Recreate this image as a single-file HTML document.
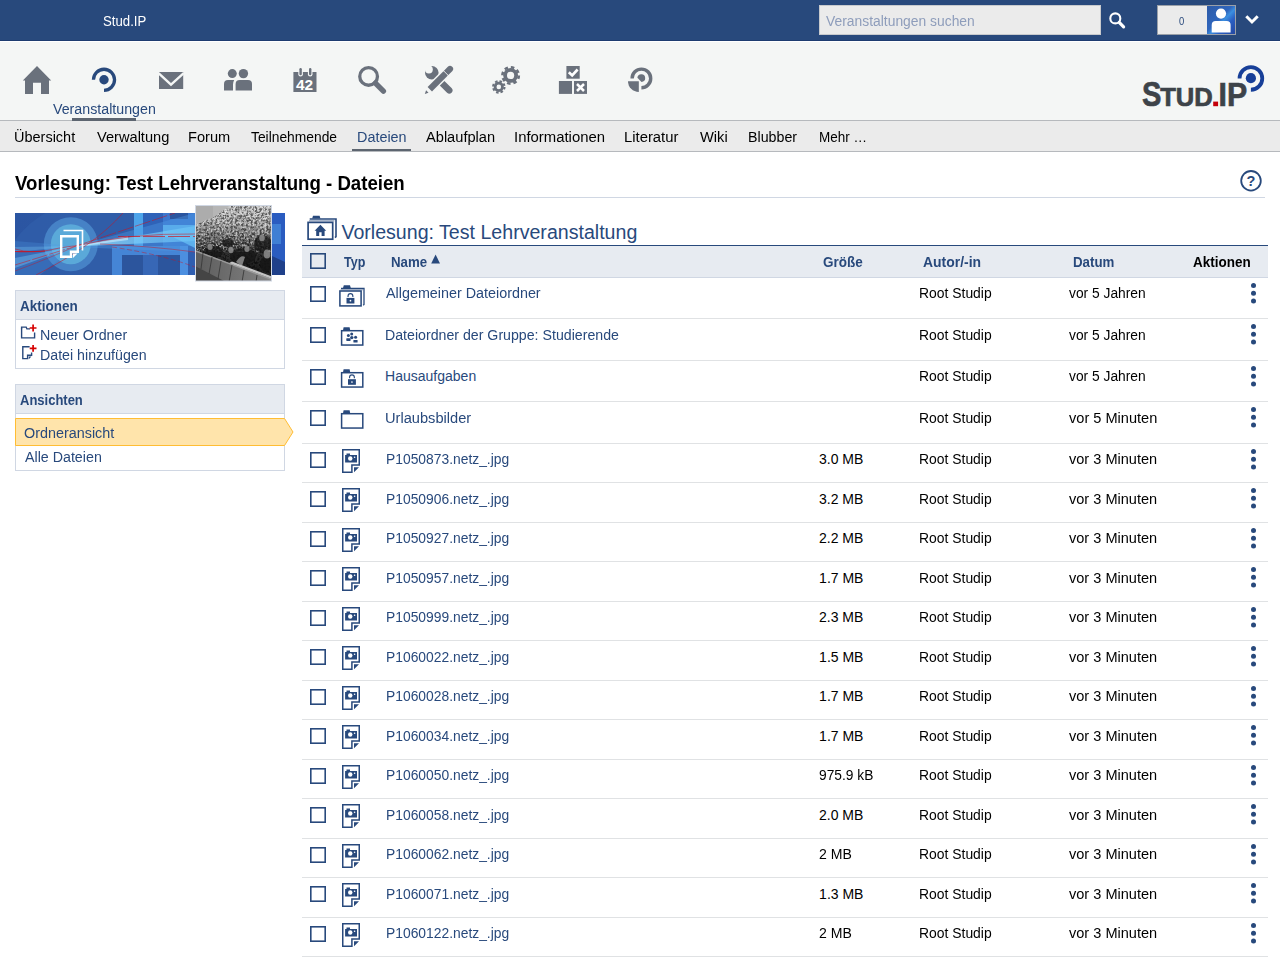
<!DOCTYPE html>
<html lang="de"><head><meta charset="utf-8"><title>Stud.IP - Dateien</title>
<style>
html,body{margin:0;padding:0;width:1280px;height:960px;overflow:hidden;background:#fff;font-family:"Liberation Sans",sans-serif;}
.abs{position:absolute;display:block}
.t{position:absolute;white-space:nowrap;transform-origin:0 0;}
.sep{position:absolute;left:302px;width:966px;height:1px;background:#e0e2e4}
.box{position:absolute;box-sizing:border-box}
svg{overflow:visible}
</style></head><body>
<svg width="0" height="0" style="position:absolute"><defs>
<g id="cb"><rect x="0.8" y="0.8" width="14.4" height="14.4" fill="none" stroke="#28497c" stroke-width="1.6"/></g>
<g id="kebab" fill="#28497c"><circle cx="4.5" cy="4.5" r="2.5"/><circle cx="4.5" cy="12.3" r="2.5"/><circle cx="4.5" cy="20" r="2.5"/></g>
<g id="i-file">
<path d="M2.75,1.75H19.25V17H11.9V24.15H2.75Z" fill="none" stroke="#28497c" stroke-width="1.5"/>
<path d="M14,19.25H19L14,24.2Z" fill="#28497c"/>
<path d="M5.1,6.9H6.5V5.5H10V6.9H17V14.4H5.1Z" fill="#28497c"/>
<circle cx="10.25" cy="10.5" r="2.2" fill="#fff"/><circle cx="14.6" cy="9.2" r="0.8" fill="#fff"/>
</g>
<g id="folderbase">
<rect x="3.6" y="5.7" width="21.2" height="14.35" fill="none" stroke="#28497c" stroke-width="1.5"/>
<path d="M5,5.2L5.6,2.2H11.6L12.2,5.2Z" fill="#28497c"/>
</g>
<g id="i-fempty"><use href="#folderbase"/></g>
<g id="lock" fill="#28497c">
<rect x="10" y="12.2" width="7.9" height="5.6"/>
<path d="M11.55,11.3V10.3a2.4,2.4 0 0 1 4.8,0V11.3" fill="none" stroke="#28497c" stroke-width="1.15"/>
<circle cx="13.95" cy="15" r="0.85" fill="#fff"/>
</g>
<g id="i-flock"><use href="#folderbase"/><use href="#lock"/></g>
<g id="i-fgroup"><use href="#folderbase"/>
<g fill="#28497c"><circle cx="10.4" cy="10.6" r="1.5"/><circle cx="13.7" cy="9" r="1.5"/><circle cx="13.8" cy="12.6" r="1.7"/><circle cx="17.6" cy="12.3" r="1.5"/>
<rect x="8.3" y="13.2" width="4.3" height="2.7" rx="0.6"/><rect x="15.4" y="15" width="4.2" height="2.6" rx="0.6"/></g>
</g>
<g id="i-fmulti">
<rect x="1.9" y="7" width="21.2" height="14.9" fill="none" stroke="#28497c" stroke-width="1.55"/>
<rect x="2.6" y="5" width="22.6" height="1.3" fill="#28497c" opacity="0.45"/>
<path d="M3,4.4H26V20.4L25.2,21.2" fill="none" stroke="#28497c" stroke-width="1.3"/>
<path d="M5,4L5.8,1.3H12L12.8,4Z" fill="#28497c"/>
<g transform="translate(-1.5,1.7)"><use href="#lock"/></g>
</g>
</defs></svg>
<!-- ===== top bar ===== -->
<div class="box" style="left:0;top:0;width:1280px;height:40px;background:#28497c"></div>
<div class="box" style="left:0;top:40px;width:1280px;height:1px;background:#1d3c70"></div>
<div class="box" style="left:0;top:41px;width:1280px;height:1px;background:#fff"></div>
<div class="box" style="left:0;top:42px;width:1280px;height:78px;background:#f4f6f5"></div>
<!-- search field -->
<div class="box" style="left:819px;top:5px;width:282px;height:30px;background:#ebebeb;border:1px solid #c8cacd"></div>
<svg class="abs" style="left:1107px;top:10px" width="20" height="20"><circle cx="8.3" cy="8.4" r="5" fill="none" stroke="#fff" stroke-width="2.1"/><path d="M12.2,12.4L16.6,16.8" stroke="#fff" stroke-width="3.2" stroke-linecap="round"/></svg>
<!-- notification + avatar -->
<div class="box" style="left:1157px;top:5px;width:79px;height:30px;background:#ebebeb;border:1px solid #9aa0a8"></div>
<svg class="abs" style="left:1207px;top:6px" width="28" height="28">
<defs><linearGradient id="avg" x1="0" y1="0" x2="1" y2="1"><stop offset="0" stop-color="#2d5aa6"/><stop offset="0.45" stop-color="#2f66bd"/><stop offset="0.55" stop-color="#3b8fe0"/><stop offset="0.7" stop-color="#2a5fc4"/><stop offset="1" stop-color="#2448a0"/></linearGradient></defs>
<rect width="28" height="28" fill="url(#avg)"/>
<circle cx="14" cy="7.6" r="5.1" fill="#fff"/>
<path d="M4.7,26.5V19a4,4 0 0 1 4,-4H19.6a4,4 0 0 1 4,4V26.5Z" fill="#fff"/>
</svg>
<svg class="abs" style="left:1243px;top:12px" width="18" height="16"><path d="M3.3,4.3L9,10L14.7,4.3" fill="none" stroke="#fff" stroke-width="3"/></svg>

<!-- ===== main nav icons ===== -->
<svg class="abs" style="left:0;top:42px" width="700" height="78" viewBox="0 42 700 78">
<g fill="#6a717c">
<!-- home -->
<path d="M37,66L51.2,80.4H49V94H41V82.8H33V94H25V80.4H22.8Z"/>
<!-- mail -->
<rect x="159" y="72" width="24.2" height="17"/>
<path d="M158.5,73.2L171,84.6L183.7,73.2" fill="none" stroke="#f4f6f5" stroke-width="2.4"/>
<!-- community -->
<circle cx="232.3" cy="73.6" r="4.5"/><circle cx="243.4" cy="73.6" r="4.7"/>
<path d="M224,90.6V84a4,4 0 0 1 4,-4H234.2Q233,82 233,84.5V90.6Z"/>
<path d="M235.6,90.6V84a4,4 0 0 1 4,-4H248a4,4 0 0 1 4,4V90.6Z"/>
<!-- calendar -->
<rect x="293.4" y="72" width="23.1" height="20"/>
<rect x="298.3" y="67" width="4.6" height="9.6" rx="2.3" fill="#f4f6f5"/><rect x="307.9" y="67" width="4.6" height="9.6" rx="2.3" fill="#f4f6f5"/>
<rect x="299.4" y="68" width="2.4" height="7.2" rx="1.2"/><rect x="309" y="68" width="2.4" height="7.2" rx="1.2"/>
<text x="296" y="89.7" font-family="Liberation Sans" font-weight="700" font-size="15" fill="#fff" textLength="17.2" lengthAdjust="spacingAndGlyphs">42</text>
<!-- search -->
<circle cx="368.6" cy="76.4" r="8.85" fill="none" stroke="#6a717c" stroke-width="3.3"/>
<path d="M375.4,83.2L383.4,91.1" stroke="#6a717c" stroke-width="5.4" stroke-linecap="round"/>
<!-- tools: wrench -->
<circle cx="431.8" cy="72.8" r="6.8"/>
<circle cx="428.9" cy="69.5" r="3.9" fill="#f4f6f5"/>
<path d="M434.5,75.8L449.3,90.4" stroke="#6a717c" stroke-width="6.4" stroke-linecap="round"/>
<!-- pencil (with white outline gap) -->
<path d="M427.5,91.5L450.5,68.5" stroke="#f4f6f5" stroke-width="9" />
<path d="M429.8,89.2L445.4,73.6" stroke="#6a717c" stroke-width="6.2"/>
<path d="M446.4,72.6L450,69" stroke="#6a717c" stroke-width="6.2" stroke-linecap="round"/>
<path d="M443.4,70.6L448.4,75.6" stroke="#f4f6f5" stroke-width="0.9"/>
<path d="M424.8,94L426.1,90.3L428.5,92.7Z"/>
<!-- gears -->
<circle cx="510.6" cy="75.4" r="7.4"/><circle cx="510.6" cy="75.4" r="8.2" fill="none" stroke="#6a717c" stroke-width="2.6" stroke-dasharray="3.5 2.94"/>
<circle cx="510.6" cy="75.4" r="3.6" fill="#f4f6f5"/>
<circle cx="498.8" cy="86.9" r="5.1"/><circle cx="498.8" cy="86.9" r="5.7" fill="none" stroke="#6a717c" stroke-width="2.1" stroke-dasharray="2.5 1.98"/>
<circle cx="498.8" cy="86.9" r="2.3" fill="#f4f6f5"/>
<!-- blocks -->
<rect x="566.4" y="66" width="13.3" height="12.7"/><rect x="558.9" y="81" width="13.1" height="12.9"/><rect x="574" y="81" width="13" height="12.9"/>
<path d="M568.8,72.2L572.2,75.4L577.6,69.5" fill="none" stroke="#fff" stroke-width="2.7"/>
<path d="M577,84L584,91M584,84L577,91" stroke="#fff" stroke-width="2.5"/>
<!-- plugin -->
<path d="M632.1,78.4A9.3,9.3 0 1 1 641.4,87.7" fill="none" stroke="#6a717c" stroke-width="3.4"/>
<path d="M637.4,77.8A3.9,3.9 0 1 1 641.5,82Z"/>
<path d="M638.8,81.2V92A10.8,10.8 0 0 1 628,81.2Z"/>
</g>
<!-- seminar (active) -->
<path d="M93.45,79.8A10.55,10.55 0 1 1 104,90.35" fill="none" stroke="#28497c" stroke-width="3.3"/>
<circle cx="104" cy="79.8" r="4.7" fill="#28497c"/>
</svg>
<div class="box" style="left:72px;top:118px;width:64px;height:3px;background:#5d6570"></div>

<!-- logo -->
<svg class="abs" style="left:1130px;top:60px" width="150" height="56" viewBox="1130 60 150 56">
<g font-family="Liberation Sans" font-weight="700" fill="#3d4349" stroke="#3d4349" stroke-width="0.7">
<text x="1142" y="106" font-size="34.6" textLength="19.4" lengthAdjust="spacingAndGlyphs">S</text>
<text x="1160.2" y="106" font-size="26.5" textLength="52.6" lengthAdjust="spacingAndGlyphs">TUD</text>
<text x="1218.6" y="106" font-size="33.8" textLength="28.6" lengthAdjust="spacingAndGlyphs">IP</text>
</g>
<rect x="1213.2" y="101.6" width="4.9" height="4.6" fill="#c4000a"/>
<path d="M1239.55,78.4A11.35,11.35 0 1 1 1250.9,89.75" fill="none" stroke="#173f98" stroke-width="3.8"/>
<circle cx="1250.9" cy="78.2" r="5.1" fill="#173f98"/>
</svg>

<!-- ===== tabs bar ===== -->
<div class="box" style="left:0;top:120px;width:1280px;height:32px;background:#ebebeb;border-top:1px solid #b6b9bd;border-bottom:1px solid #b6b9bd"></div>
<div class="box" style="left:72px;top:118px;width:64px;height:3px;background:#5d6570"></div>
<div class="box" style="left:352px;top:149px;width:59px;height:2px;background:#5d6570"></div>

<!-- ===== page title ===== -->
<div class="box" style="left:15px;top:197px;width:1250px;height:1px;background:#d0d7e3"></div>
<svg class="abs" style="left:1239px;top:169px" width="24" height="24"><circle cx="12" cy="11.8" r="9.8" fill="none" stroke="#28497c" stroke-width="1.8"/>
<text x="12" y="17" text-anchor="middle" font-family="Liberation Sans" font-weight="700" font-size="14.5" fill="#28497c">?</text></svg>

<!-- ===== sidebar ===== -->
<svg class="abs" style="left:15px;top:205px" width="270" height="77" viewBox="15 205 270 77">
<defs>
<linearGradient id="bg1" x1="0" y1="0" x2="1" y2="0"><stop offset="0" stop-color="#2b55a2"/><stop offset="0.5" stop-color="#2f5aa3"/><stop offset="1" stop-color="#2c57a2"/></linearGradient>
<linearGradient id="ph" x1="0" y1="0" x2="0" y2="1"><stop offset="0" stop-color="#cdcdcd"/><stop offset="0.22" stop-color="#b0b0b0"/><stop offset="0.4" stop-color="#787878"/><stop offset="0.56" stop-color="#3c3c3c"/><stop offset="0.8" stop-color="#1f1f1f"/><stop offset="1" stop-color="#2a2a2a"/></linearGradient>
<linearGradient id="bench" x1="0" y1="0" x2="1" y2="0"><stop offset="0" stop-color="#5c5c5c"/><stop offset="0.6" stop-color="#747474"/><stop offset="1" stop-color="#858585"/></linearGradient>
<linearGradient id="rayR" x1="0" y1="0" x2="1" y2="0"><stop offset="0" stop-color="#9fe2ff" stop-opacity="0.9"/><stop offset="1" stop-color="#6cc6f7" stop-opacity="0.75"/></linearGradient>
<filter id="noise" x="0" y="0" width="100%" height="100%"><feTurbulence type="fractalNoise" baseFrequency="0.55" numOctaves="2" seed="11" result="n"/><feColorMatrix in="n" type="matrix" values="0 0 0 0 1  0 0 0 0 1  0 0 0 0 1  2.6 2.6 0 0 -2.3"/></filter>
<filter id="noiseD" x="0" y="0" width="100%" height="100%"><feTurbulence type="fractalNoise" baseFrequency="0.45" numOctaves="2" seed="3" result="n"/><feColorMatrix in="n" type="matrix" values="0 0 0 0 0  0 0 0 0 0  0 0 0 0 0  0 2.8 2.8 0 -2.5"/></filter>
<clipPath id="bclip"><rect x="15" y="213" width="270" height="62"/></clipPath>
<clipPath id="pclip"><rect x="195.5" y="205.5" width="76" height="75.5"/></clipPath>
</defs>
<rect x="15" y="213" width="270" height="62" fill="url(#bg1)"/>
<g clip-path="url(#bclip)">
<circle cx="95" cy="300" r="100" fill="#3260ab" opacity="0.6"/>
<!-- light structures -->
<rect x="112" y="246" width="83" height="29" fill="#4585d6"/>
<rect x="122" y="255" width="58" height="20" fill="#2c559d"/>
<rect x="143" y="255" width="15" height="20" fill="#3767b6"/>
<rect x="180" y="246" width="8" height="29" fill="#4c8fe0"/>
<rect x="188" y="246" width="7" height="29" fill="#2f5eb0"/>
<rect x="134" y="213" width="9" height="33" fill="#4da4ea"/>
<rect x="143" y="213" width="20" height="33" fill="#2f62b8"/>
<rect x="163" y="213" width="32" height="33" fill="#3b78cf"/>
<rect x="170" y="213" width="18" height="6" fill="#2a559f"/>
<rect x="163" y="225" width="32" height="12" fill="#5fb6ef"/>
<path d="M171,236H195V248Z" fill="#66bdf2"/>
<rect x="272" y="213" width="13" height="62" fill="#2a5cc0"/>
<rect x="272" y="224" width="9" height="20" fill="#3f7fd4"/>
<path d="M272,256L285,262V275H272Z" fill="#1f408a"/>
<!-- circles -->
<circle cx="70.8" cy="244.2" r="27" fill="#4682c6"/>
<circle cx="70.8" cy="244.2" r="20" fill="#5aa9d9"/>
<!-- beams -->
<path d="M76,246L15,241V275H40Z" fill="#4f9ce6" opacity="0.25"/>
<path d="M76,246L15,258V268Z" fill="#7cc9f5" opacity="0.4"/><path d="M76,246L15,247V252Z" fill="#7cc9f5" opacity="0.3"/>
<path d="M72,247L195,213V252Z" fill="#4f9ce6" opacity="0.38"/>
<path d="M74,246.5L195,226V241Z" fill="url(#rayR)" opacity="0.8"/>
<path d="M60,249L128,236L128,240Z" fill="#d6f2ff" opacity="0.55"/>
<!-- red lines -->
<g fill="none" stroke="#d0101c" stroke-width="0.6" opacity="0.85">
<path d="M15,249Q32,254 50,250T76,246"/>
<path d="M15,251.5Q32,252 45,251" stroke-width="1.1"/>
<path d="M15,265L76,246L175,213" stroke-dasharray="16 2"/>
<path d="M15,271Q50,258 76,246" opacity="0.8"/>
<path d="M36,275Q95,245 123,213"/>
<path d="M76,246Q130,233 195,234" />
<path d="M118,236.5H195" stroke-width="0.8" stroke-dasharray="22 3"/>
<path d="M100,244Q150,246 195,252" opacity="0.9"/>
<path d="M112,247Q160,254 195,267" stroke-dasharray="5 2.5" opacity="0.85"/>
</g>
<!-- files icon -->
<path d="M63.5,230.5H82.5V250.5" fill="none" stroke="#fff" stroke-width="1.6"/>
<path d="M61.2,236.2H77.8V251.8H71V256.8H61.2Z" fill="none" stroke="#fff" stroke-width="2.4"/>
<path d="M73,253.5H77.5L73,258Z" fill="#fff"/>
</g>
<!-- photo -->
<rect x="195.5" y="205.5" width="76" height="75.5" fill="url(#ph)"/>
<g clip-path="url(#pclip)">
<rect x="195.5" y="205.5" width="76" height="46" filter="url(#noise)" opacity="0.5"/>
<rect x="195.5" y="205.5" width="76" height="75.5" filter="url(#noiseD)" opacity="0.55"/>
<path d="M195,205H231L214,217L195,225Z" fill="#b6b6b6"/>
<path d="M195,205H213V217L195,224Z" fill="#a8a8a8" opacity="0.7"/>
<g fill="#161616" opacity="0.78"><ellipse cx="213" cy="252" rx="10" ry="6"/><ellipse cx="243" cy="256" rx="13" ry="8"/><ellipse cx="263" cy="244" rx="9" ry="9"/><ellipse cx="228" cy="243" rx="6" ry="4"/><ellipse cx="266" cy="264" rx="6" ry="8"/></g>
<g fill="#8e8e8e" opacity="0.85"><ellipse cx="210" cy="247" rx="2.6" ry="3"/><ellipse cx="231" cy="250" rx="2.6" ry="3.2"/><ellipse cx="247" cy="249" rx="2.6" ry="3"/><ellipse cx="262" cy="238" rx="2.8" ry="3.2"/><ellipse cx="267" cy="254" rx="3.4" ry="4.5"/></g>
<path d="M236,262Q241,254 245,257L242,266Z" fill="#7e7e7e"/>
<path d="M195,250L272,279V282H195Z" fill="url(#bench)"/>
<path d="M195,250L272,279V280.2L195,251.6Z" fill="#9a9a9a"/>
<path d="M232,261.5L272,276.5V279L229,263Z" fill="#c2c2c2"/>
<path d="M195,266L226,282H195Z" fill="#454545"/>
<g stroke="#3a3a3a" stroke-width="0.9"><path d="M203,253L201,269"/><path d="M212,257L209,274"/><path d="M221,261L218,279"/><path d="M232,265L229,282"/><path d="M244,270L242,282"/><path d="M257,275L256,282"/></g>
</g>
<rect x="195.5" y="205.5" width="76" height="75.5" fill="none" stroke="#d0d7e3" stroke-width="1"/>
</svg>

<!-- widget: Aktionen -->
<div class="box" style="left:15px;top:290px;width:270px;height:79px;border:1px solid #d0d7e3;background:#fff"></div>
<div class="box" style="left:16px;top:291px;width:268px;height:29px;background:#e7ebf1;border-bottom:1px solid #d0d7e3"></div>
<svg class="abs" style="left:20px;top:324px" width="17" height="16">
<path d="M1.6,4.9V3.1H6.2L6.9,4.9H10" fill="none" stroke="#28497c" stroke-width="1.4"/>
<path d="M1.6,4.4V13.9H14.6V8.5" fill="none" stroke="#28497c" stroke-width="1.4"/>
<path d="M13.1,0.6V7.4M9.7,4H16.5" stroke="#d60000" stroke-width="1.7"/>
</svg>
<svg class="abs" style="left:20px;top:344px" width="17" height="17">
<path d="M9.6,2.7H2.8V14.6H7.6V11.2H11.6V8.6" fill="none" stroke="#28497c" stroke-width="1.4"/>
<path d="M8.8,12.6H11.4L8.8,15.2Z" fill="#28497c"/>
<path d="M13.1,1V7.8M9.7,4.4H16.5" stroke="#d60000" stroke-width="1.7"/>
</svg>

<!-- widget: Ansichten -->
<div class="box" style="left:15px;top:384px;width:270px;height:87px;border:1px solid #d0d7e3;background:#fff"></div>
<div class="box" style="left:16px;top:385px;width:268px;height:29px;background:#e7ebf1;border-bottom:1px solid #d0d7e3"></div>
<svg class="abs" style="left:15px;top:417px" width="280" height="30"><path d="M0.5,1.5H269.5L278,15L269.5,28.5H0.5Z" fill="#ffe4ab" stroke="#ffbd33" stroke-width="1"/></svg>

<!-- ===== table ===== -->
<svg class="abs" style="left:305px;top:214px" width="34" height="28">
<rect x="3.1" y="8.4" width="24.6" height="16.8" fill="none" stroke="#28497c" stroke-width="1.7"/>
<rect x="4" y="6.1" width="25.4" height="1.4" fill="#28497c" opacity="0.45"/>
<path d="M4.7,5H31V22.6L30,23.6" fill="none" stroke="#28497c" stroke-width="1.6"/>
<path d="M7.2,4.5L8,1.8H14.6L15.4,4.5Z" fill="#28497c"/>
<path d="M15.4,10.8L21.2,16.8H19.6V22H16.6V18.2H14.2V22H11.2V16.8H9.6Z" fill="#28497c"/>
</svg>
<div class="box" style="left:302px;top:245px;width:966px;height:1px;background:#28497c"></div>
<div class="box" style="left:302px;top:246px;width:966px;height:31px;background:#e7ebf1"></div>
<div class="box" style="left:302px;top:277px;width:966px;height:1px;background:#d0d7e3"></div>
<svg class="abs" style="left:310px;top:253px" width="16" height="16"><use href="#cb"/></svg>
<svg class="abs" style="left:431px;top:254px" width="10" height="10"><path d="M0.2,9.5L4.6,0.5L9,9.5Z" fill="#28497c"/></svg>
<div class="sep" style="top:318px"></div>
<div class="sep" style="top:360px"></div>
<div class="sep" style="top:401px"></div>
<div class="sep" style="top:443px"></div>
<div class="sep" style="top:482px"></div>
<div class="sep" style="top:522px"></div>
<div class="sep" style="top:561px"></div>
<div class="sep" style="top:601px"></div>
<div class="sep" style="top:640px"></div>
<div class="sep" style="top:680px"></div>
<div class="sep" style="top:719px"></div>
<div class="sep" style="top:759px"></div>
<div class="sep" style="top:798px"></div>
<div class="sep" style="top:838px"></div>
<div class="sep" style="top:877px"></div>
<div class="sep" style="top:917px"></div>
<div class="sep" style="top:956px"></div>
<svg class="abs" style="left:310px;top:286.0px" width="16" height="16"><use href="#cb"/></svg>
<svg class="abs" style="left:1249px;top:281.0px" width="9" height="24"><use href="#kebab"/></svg>
<svg class="abs" style="left:338px;top:284.0px" width="28" height="24"><use href="#i-fmulti"/></svg>
<svg class="abs" style="left:310px;top:327.0px" width="16" height="16"><use href="#cb"/></svg>
<svg class="abs" style="left:1249px;top:322.0px" width="9" height="24"><use href="#kebab"/></svg>
<svg class="abs" style="left:338px;top:325.0px" width="28" height="24"><use href="#i-fgroup"/></svg>
<svg class="abs" style="left:310px;top:369.0px" width="16" height="16"><use href="#cb"/></svg>
<svg class="abs" style="left:1249px;top:364.0px" width="9" height="24"><use href="#kebab"/></svg>
<svg class="abs" style="left:338px;top:367.0px" width="28" height="24"><use href="#i-flock"/></svg>
<svg class="abs" style="left:310px;top:410.0px" width="16" height="16"><use href="#cb"/></svg>
<svg class="abs" style="left:1249px;top:405.0px" width="9" height="24"><use href="#kebab"/></svg>
<svg class="abs" style="left:338px;top:408.0px" width="28" height="24"><use href="#i-fempty"/></svg>
<svg class="abs" style="left:310px;top:452.0px" width="16" height="16"><use href="#cb"/></svg>
<svg class="abs" style="left:1249px;top:447.0px" width="9" height="24"><use href="#kebab"/></svg>
<svg class="abs" style="left:340px;top:448.0px" width="24" height="26"><use href="#i-file"/></svg>
<svg class="abs" style="left:310px;top:491.0px" width="16" height="16"><use href="#cb"/></svg>
<svg class="abs" style="left:1249px;top:486.0px" width="9" height="24"><use href="#kebab"/></svg>
<svg class="abs" style="left:340px;top:487.0px" width="24" height="26"><use href="#i-file"/></svg>
<svg class="abs" style="left:310px;top:531.0px" width="16" height="16"><use href="#cb"/></svg>
<svg class="abs" style="left:1249px;top:526.0px" width="9" height="24"><use href="#kebab"/></svg>
<svg class="abs" style="left:340px;top:527.0px" width="24" height="26"><use href="#i-file"/></svg>
<svg class="abs" style="left:310px;top:570.0px" width="16" height="16"><use href="#cb"/></svg>
<svg class="abs" style="left:1249px;top:565.0px" width="9" height="24"><use href="#kebab"/></svg>
<svg class="abs" style="left:340px;top:566.0px" width="24" height="26"><use href="#i-file"/></svg>
<svg class="abs" style="left:310px;top:610.0px" width="16" height="16"><use href="#cb"/></svg>
<svg class="abs" style="left:1249px;top:605.0px" width="9" height="24"><use href="#kebab"/></svg>
<svg class="abs" style="left:340px;top:606.0px" width="24" height="26"><use href="#i-file"/></svg>
<svg class="abs" style="left:310px;top:649.0px" width="16" height="16"><use href="#cb"/></svg>
<svg class="abs" style="left:1249px;top:644.0px" width="9" height="24"><use href="#kebab"/></svg>
<svg class="abs" style="left:340px;top:645.0px" width="24" height="26"><use href="#i-file"/></svg>
<svg class="abs" style="left:310px;top:689.0px" width="16" height="16"><use href="#cb"/></svg>
<svg class="abs" style="left:1249px;top:684.0px" width="9" height="24"><use href="#kebab"/></svg>
<svg class="abs" style="left:340px;top:685.0px" width="24" height="26"><use href="#i-file"/></svg>
<svg class="abs" style="left:310px;top:728.0px" width="16" height="16"><use href="#cb"/></svg>
<svg class="abs" style="left:1249px;top:723.0px" width="9" height="24"><use href="#kebab"/></svg>
<svg class="abs" style="left:340px;top:724.0px" width="24" height="26"><use href="#i-file"/></svg>
<svg class="abs" style="left:310px;top:768.0px" width="16" height="16"><use href="#cb"/></svg>
<svg class="abs" style="left:1249px;top:763.0px" width="9" height="24"><use href="#kebab"/></svg>
<svg class="abs" style="left:340px;top:764.0px" width="24" height="26"><use href="#i-file"/></svg>
<svg class="abs" style="left:310px;top:807.0px" width="16" height="16"><use href="#cb"/></svg>
<svg class="abs" style="left:1249px;top:802.0px" width="9" height="24"><use href="#kebab"/></svg>
<svg class="abs" style="left:340px;top:803.0px" width="24" height="26"><use href="#i-file"/></svg>
<svg class="abs" style="left:310px;top:847.0px" width="16" height="16"><use href="#cb"/></svg>
<svg class="abs" style="left:1249px;top:842.0px" width="9" height="24"><use href="#kebab"/></svg>
<svg class="abs" style="left:340px;top:843.0px" width="24" height="26"><use href="#i-file"/></svg>
<svg class="abs" style="left:310px;top:886.0px" width="16" height="16"><use href="#cb"/></svg>
<svg class="abs" style="left:1249px;top:881.0px" width="9" height="24"><use href="#kebab"/></svg>
<svg class="abs" style="left:340px;top:882.0px" width="24" height="26"><use href="#i-file"/></svg>
<svg class="abs" style="left:310px;top:926.0px" width="16" height="16"><use href="#cb"/></svg>
<svg class="abs" style="left:1249px;top:921.0px" width="9" height="24"><use href="#kebab"/></svg>
<svg class="abs" style="left:340px;top:922.0px" width="24" height="26"><use href="#i-file"/></svg>
<span class="t" style="left:103.20px;top:14.15px;font-size:14px;line-height:14px;color:#fff;transform:scaleX(0.9434);">Stud.IP</span>
<span class="t" style="left:826.40px;top:14.15px;font-size:14px;line-height:14px;color:#8e9dbb;transform:scaleX(0.9904);">Veranstaltungen suchen</span>
<span class="t" style="left:1179.40px;top:15.71px;font-size:10.5px;line-height:10.5px;color:#28497c;transform:scaleX(0.9000);">0</span>
<span class="t" style="left:53.10px;top:101.95px;font-size:14px;line-height:14px;color:#28497c;transform:scaleX(1.0159);">Veranstaltungen</span>
<span class="t" style="left:14.47px;top:129.85px;font-size:14px;line-height:14px;color:#000;transform:scaleX(1.0345);">Übersicht</span>
<span class="t" style="left:96.50px;top:129.85px;font-size:14px;line-height:14px;color:#000;transform:scaleX(1.0441);">Verwaltung</span>
<span class="t" style="left:187.71px;top:129.85px;font-size:14px;line-height:14px;color:#000;transform:scaleX(1.0442);">Forum</span>
<span class="t" style="left:250.50px;top:129.85px;font-size:14px;line-height:14px;color:#000;transform:scaleX(0.9870);">Teilnehmende</span>
<span class="t" style="left:356.72px;top:129.85px;font-size:14px;line-height:14px;color:#28497c;transform:scaleX(1.0276);">Dateien</span>
<span class="t" style="left:426.25px;top:129.85px;font-size:14px;line-height:14px;color:#000;transform:scaleX(1.0439);">Ablaufplan</span>
<span class="t" style="left:514.34px;top:129.85px;font-size:14px;line-height:14px;color:#000;transform:scaleX(1.0630);">Informationen</span>
<span class="t" style="left:624.24px;top:129.85px;font-size:14px;line-height:14px;color:#000;transform:scaleX(1.0592);">Literatur</span>
<span class="t" style="left:700.40px;top:129.85px;font-size:14px;line-height:14px;color:#000;transform:scaleX(1.0485);">Wiki</span>
<span class="t" style="left:748.38px;top:129.85px;font-size:14px;line-height:14px;color:#000;transform:scaleX(1.0170);">Blubber</span>
<span class="t" style="left:818.84px;top:129.85px;font-size:14px;line-height:14px;color:#000;transform:scaleX(0.9626);">Mehr …</span>
<span class="t" style="left:15.00px;top:172.02px;font-size:21px;line-height:21px;color:#000;font-weight:700;transform:scaleX(0.8875);">Vorlesung: Test Lehrveranstaltung - Dateien</span>
<span class="t" style="left:20.20px;top:298.75px;font-size:14px;line-height:14px;color:#28497c;font-weight:700;transform:scaleX(0.9640);">Aktionen</span>
<span class="t" style="left:39.58px;top:327.55px;font-size:14px;line-height:14px;color:#28497c;transform:scaleX(1.0185);">Neuer Ordner</span>
<span class="t" style="left:39.59px;top:347.55px;font-size:14px;line-height:14px;color:#28497c;transform:scaleX(1.0146);">Datei hinzufügen</span>
<span class="t" style="left:20.20px;top:392.85px;font-size:14px;line-height:14px;color:#28497c;font-weight:700;transform:scaleX(0.9281);">Ansichten</span>
<span class="t" style="left:24.40px;top:425.65px;font-size:14px;line-height:14px;color:#28497c;transform:scaleX(1.0268);">Ordneransicht</span>
<span class="t" style="left:25.20px;top:450.15px;font-size:14px;line-height:14px;color:#28497c;transform:scaleX(1.0174);">Alle Dateien</span>
<span class="t" style="left:341.40px;top:223.21px;font-size:19.6px;line-height:19.6px;color:#28497c;">Vorlesung: Test Lehrveranstaltung</span>
<span class="t" style="left:343.70px;top:255.15px;font-size:14px;line-height:14px;color:#28497c;font-weight:700;transform:scaleX(0.8927);">Typ</span>
<span class="t" style="left:390.70px;top:255.15px;font-size:14px;line-height:14px;color:#28497c;font-weight:700;transform:scaleX(0.9467);">Name</span>
<span class="t" style="left:823.30px;top:255.15px;font-size:14px;line-height:14px;color:#28497c;font-weight:700;transform:scaleX(0.9628);">Größe</span>
<span class="t" style="left:923.20px;top:255.15px;font-size:14px;line-height:14px;color:#28497c;font-weight:700;transform:scaleX(0.9954);">Autor/-in</span>
<span class="t" style="left:1073.40px;top:255.15px;font-size:14px;line-height:14px;color:#28497c;font-weight:700;transform:scaleX(0.9487);">Datum</span>
<span class="t" style="left:1193.40px;top:255.15px;font-size:14px;line-height:14px;color:#000;font-weight:700;transform:scaleX(0.9623);">Aktionen</span>
<span class="t" style="left:386.10px;top:286.15px;font-size:14px;line-height:14px;color:#28497c;transform:scaleX(1.0244);">Allgemeiner Dateiordner</span>
<span class="t" style="left:918.61px;top:286.15px;font-size:14px;line-height:14px;color:#000;transform:scaleX(0.9935);">Root Studip</span>
<span class="t" style="left:1069.40px;top:286.15px;font-size:14px;line-height:14px;color:#000;transform:scaleX(0.9853);">vor 5 Jahren</span>
<span class="t" style="left:385.09px;top:328.15px;font-size:14px;line-height:14px;color:#28497c;transform:scaleX(1.0119);">Dateiordner der Gruppe: Studierende</span>
<span class="t" style="left:918.61px;top:328.15px;font-size:14px;line-height:14px;color:#000;transform:scaleX(0.9935);">Root Studip</span>
<span class="t" style="left:1069.40px;top:328.15px;font-size:14px;line-height:14px;color:#000;transform:scaleX(0.9853);">vor 5 Jahren</span>
<span class="t" style="left:385.10px;top:369.15px;font-size:14px;line-height:14px;color:#28497c;">Hausaufgaben</span>
<span class="t" style="left:918.61px;top:369.15px;font-size:14px;line-height:14px;color:#000;transform:scaleX(0.9935);">Root Studip</span>
<span class="t" style="left:1069.40px;top:369.15px;font-size:14px;line-height:14px;color:#000;transform:scaleX(0.9853);">vor 5 Jahren</span>
<span class="t" style="left:385.06px;top:411.15px;font-size:14px;line-height:14px;color:#28497c;transform:scaleX(1.0450);">Urlaubsbilder</span>
<span class="t" style="left:918.61px;top:411.15px;font-size:14px;line-height:14px;color:#000;transform:scaleX(0.9935);">Root Studip</span>
<span class="t" style="left:1069.40px;top:411.15px;font-size:14px;line-height:14px;color:#000;transform:scaleX(1.0412);">vor 5 Minuten</span>
<span class="t" style="left:385.71px;top:452.15px;font-size:14px;line-height:14px;color:#28497c;transform:scaleX(0.9889);">P1050873.netz_.jpg</span>
<span class="t" style="left:819.00px;top:452.15px;font-size:14px;line-height:14px;color:#000;">3.0 MB</span>
<span class="t" style="left:918.61px;top:452.15px;font-size:14px;line-height:14px;color:#000;transform:scaleX(0.9935);">Root Studip</span>
<span class="t" style="left:1069.40px;top:452.15px;font-size:14px;line-height:14px;color:#000;transform:scaleX(1.0389);">vor 3 Minuten</span>
<span class="t" style="left:385.71px;top:491.65px;font-size:14px;line-height:14px;color:#28497c;transform:scaleX(0.9889);">P1050906.netz_.jpg</span>
<span class="t" style="left:819.00px;top:491.65px;font-size:14px;line-height:14px;color:#000;">3.2 MB</span>
<span class="t" style="left:918.61px;top:491.65px;font-size:14px;line-height:14px;color:#000;transform:scaleX(0.9935);">Root Studip</span>
<span class="t" style="left:1069.40px;top:491.65px;font-size:14px;line-height:14px;color:#000;transform:scaleX(1.0389);">vor 3 Minuten</span>
<span class="t" style="left:385.71px;top:531.15px;font-size:14px;line-height:14px;color:#28497c;transform:scaleX(0.9889);">P1050927.netz_.jpg</span>
<span class="t" style="left:819.00px;top:531.15px;font-size:14px;line-height:14px;color:#000;">2.2 MB</span>
<span class="t" style="left:918.61px;top:531.15px;font-size:14px;line-height:14px;color:#000;transform:scaleX(0.9935);">Root Studip</span>
<span class="t" style="left:1069.40px;top:531.15px;font-size:14px;line-height:14px;color:#000;transform:scaleX(1.0389);">vor 3 Minuten</span>
<span class="t" style="left:385.71px;top:570.65px;font-size:14px;line-height:14px;color:#28497c;transform:scaleX(0.9889);">P1050957.netz_.jpg</span>
<span class="t" style="left:819.10px;top:570.65px;font-size:14px;line-height:14px;color:#000;">1.7 MB</span>
<span class="t" style="left:918.61px;top:570.65px;font-size:14px;line-height:14px;color:#000;transform:scaleX(0.9935);">Root Studip</span>
<span class="t" style="left:1069.40px;top:570.65px;font-size:14px;line-height:14px;color:#000;transform:scaleX(1.0389);">vor 3 Minuten</span>
<span class="t" style="left:385.71px;top:610.15px;font-size:14px;line-height:14px;color:#28497c;transform:scaleX(0.9889);">P1050999.netz_.jpg</span>
<span class="t" style="left:819.00px;top:610.15px;font-size:14px;line-height:14px;color:#000;">2.3 MB</span>
<span class="t" style="left:918.61px;top:610.15px;font-size:14px;line-height:14px;color:#000;transform:scaleX(0.9935);">Root Studip</span>
<span class="t" style="left:1069.40px;top:610.15px;font-size:14px;line-height:14px;color:#000;transform:scaleX(1.0389);">vor 3 Minuten</span>
<span class="t" style="left:385.71px;top:649.65px;font-size:14px;line-height:14px;color:#28497c;transform:scaleX(0.9889);">P1060022.netz_.jpg</span>
<span class="t" style="left:819.10px;top:649.65px;font-size:14px;line-height:14px;color:#000;">1.5 MB</span>
<span class="t" style="left:918.61px;top:649.65px;font-size:14px;line-height:14px;color:#000;transform:scaleX(0.9935);">Root Studip</span>
<span class="t" style="left:1069.40px;top:649.65px;font-size:14px;line-height:14px;color:#000;transform:scaleX(1.0389);">vor 3 Minuten</span>
<span class="t" style="left:385.71px;top:689.15px;font-size:14px;line-height:14px;color:#28497c;transform:scaleX(0.9889);">P1060028.netz_.jpg</span>
<span class="t" style="left:819.10px;top:689.15px;font-size:14px;line-height:14px;color:#000;">1.7 MB</span>
<span class="t" style="left:918.61px;top:689.15px;font-size:14px;line-height:14px;color:#000;transform:scaleX(0.9935);">Root Studip</span>
<span class="t" style="left:1069.40px;top:689.15px;font-size:14px;line-height:14px;color:#000;transform:scaleX(1.0389);">vor 3 Minuten</span>
<span class="t" style="left:385.71px;top:728.65px;font-size:14px;line-height:14px;color:#28497c;transform:scaleX(0.9889);">P1060034.netz_.jpg</span>
<span class="t" style="left:819.10px;top:728.65px;font-size:14px;line-height:14px;color:#000;">1.7 MB</span>
<span class="t" style="left:918.61px;top:728.65px;font-size:14px;line-height:14px;color:#000;transform:scaleX(0.9935);">Root Studip</span>
<span class="t" style="left:1069.40px;top:728.65px;font-size:14px;line-height:14px;color:#000;transform:scaleX(1.0389);">vor 3 Minuten</span>
<span class="t" style="left:385.71px;top:768.15px;font-size:14px;line-height:14px;color:#28497c;transform:scaleX(0.9889);">P1060050.netz_.jpg</span>
<span class="t" style="left:819.00px;top:768.15px;font-size:14px;line-height:14px;color:#000;transform:scaleX(0.9832);">975.9 kB</span>
<span class="t" style="left:918.61px;top:768.15px;font-size:14px;line-height:14px;color:#000;transform:scaleX(0.9935);">Root Studip</span>
<span class="t" style="left:1069.40px;top:768.15px;font-size:14px;line-height:14px;color:#000;transform:scaleX(1.0389);">vor 3 Minuten</span>
<span class="t" style="left:385.71px;top:807.65px;font-size:14px;line-height:14px;color:#28497c;transform:scaleX(0.9889);">P1060058.netz_.jpg</span>
<span class="t" style="left:819.00px;top:807.65px;font-size:14px;line-height:14px;color:#000;">2.0 MB</span>
<span class="t" style="left:918.61px;top:807.65px;font-size:14px;line-height:14px;color:#000;transform:scaleX(0.9935);">Root Studip</span>
<span class="t" style="left:1069.40px;top:807.65px;font-size:14px;line-height:14px;color:#000;transform:scaleX(1.0389);">vor 3 Minuten</span>
<span class="t" style="left:385.71px;top:847.15px;font-size:14px;line-height:14px;color:#28497c;transform:scaleX(0.9889);">P1060062.netz_.jpg</span>
<span class="t" style="left:819.00px;top:847.15px;font-size:14px;line-height:14px;color:#000;transform:scaleX(1.0050);">2 MB</span>
<span class="t" style="left:918.61px;top:847.15px;font-size:14px;line-height:14px;color:#000;transform:scaleX(0.9935);">Root Studip</span>
<span class="t" style="left:1069.40px;top:847.15px;font-size:14px;line-height:14px;color:#000;transform:scaleX(1.0389);">vor 3 Minuten</span>
<span class="t" style="left:385.71px;top:886.65px;font-size:14px;line-height:14px;color:#28497c;transform:scaleX(0.9889);">P1060071.netz_.jpg</span>
<span class="t" style="left:819.10px;top:886.65px;font-size:14px;line-height:14px;color:#000;">1.3 MB</span>
<span class="t" style="left:918.61px;top:886.65px;font-size:14px;line-height:14px;color:#000;transform:scaleX(0.9935);">Root Studip</span>
<span class="t" style="left:1069.40px;top:886.65px;font-size:14px;line-height:14px;color:#000;transform:scaleX(1.0389);">vor 3 Minuten</span>
<span class="t" style="left:385.71px;top:926.15px;font-size:14px;line-height:14px;color:#28497c;transform:scaleX(0.9889);">P1060122.netz_.jpg</span>
<span class="t" style="left:819.00px;top:926.15px;font-size:14px;line-height:14px;color:#000;transform:scaleX(1.0050);">2 MB</span>
<span class="t" style="left:918.61px;top:926.15px;font-size:14px;line-height:14px;color:#000;transform:scaleX(0.9935);">Root Studip</span>
<span class="t" style="left:1069.40px;top:926.15px;font-size:14px;line-height:14px;color:#000;transform:scaleX(1.0389);">vor 3 Minuten</span>

</body></html>
